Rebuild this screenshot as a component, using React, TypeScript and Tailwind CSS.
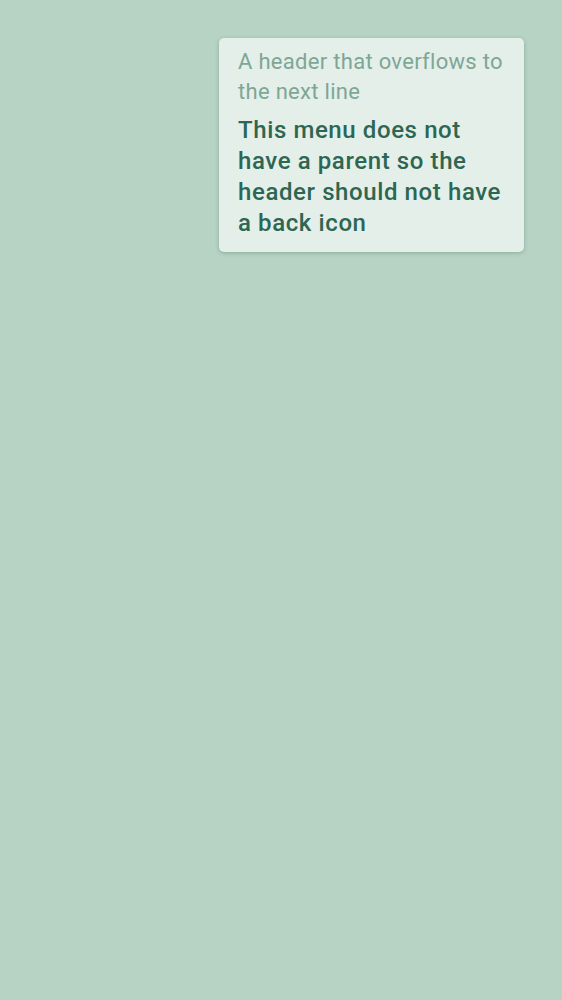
export default function App() {
  return (
    <div
      className="min-h-screen w-full bg-[#b7d3c4] flex justify-end pt-[38px] pr-[38px]"
      style={{ fontFamily: 'Roboto, "Noto Sans", sans-serif' }}
    >
      <div className="w-[305px] h-fit rounded-[5px] bg-[#e4efe9] shadow-[0_1px_4px_rgba(40,80,60,0.3)] pl-[19px] pr-[12px] pt-[9px] pb-[13px]">
        <div className="text-[22px] leading-[30px] tracking-[0.3px] text-[#7ea696]">
          A header that overflows to the next line
        </div>
        <div className="mt-[8px] text-[24px] leading-[31px] font-medium tracking-[0.6px] text-[#2d6653]">
          This menu does not have a parent so the header should not have a back icon
        </div>
      </div>
    </div>
  )
}
